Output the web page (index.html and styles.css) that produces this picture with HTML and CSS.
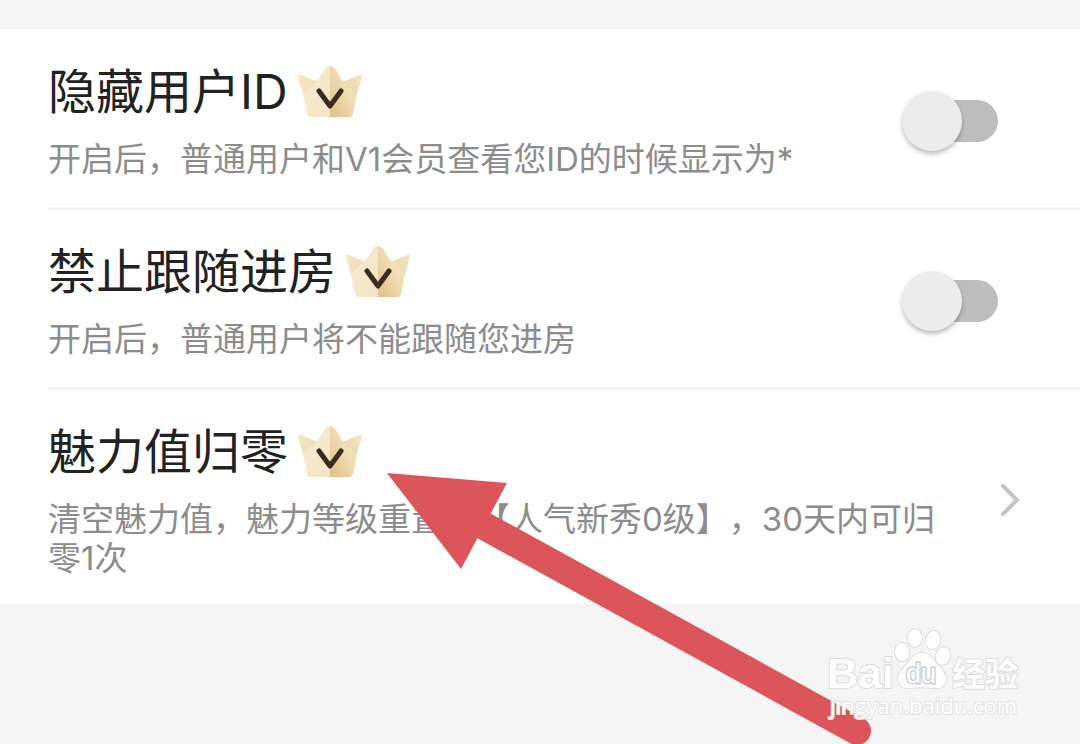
FILE: index.html
```
<!DOCTYPE html>
<html lang="zh-CN">
<head>
<meta charset="utf-8">
<meta name="viewport" content="width=device-width, initial-scale=1">
<title>隐私设置</title>
<link rel="stylesheet" href="styles.css">
</head>
<body>
<svg class="defs" aria-hidden="true">
  <defs>
    <linearGradient id="ear-left" x1="0" y1="0" x2="1" y2="1">
      <stop offset="0" stop-color="#f7e6c8"/>
      <stop offset="1" stop-color="#edd5a8"/>
    </linearGradient>
    <linearGradient id="ear-right" x1="1" y1="0" x2="0" y2="1">
      <stop offset="0" stop-color="#f5e6c6"/>
      <stop offset="1" stop-color="#e6cb98"/>
    </linearGradient>
    <linearGradient id="body-left" x1="0" y1="0" x2="1" y2="1">
      <stop offset="0" stop-color="#f8ecd5"/>
      <stop offset="1" stop-color="#f5e4c2"/>
    </linearGradient>
    <linearGradient id="body-right" x1="1" y1="0" x2="0" y2="1">
      <stop offset="0" stop-color="#f4e6c8"/>
      <stop offset="0.4" stop-color="#f1deb6"/>
      <stop offset="1" stop-color="#dfc08a"/>
    </linearGradient>
    <symbol id="crown" viewBox="0 0 68 54">
      <path fill="url(#ear-left)" d="M2 12Q2 9 5 10L24 18L14 45L9 36Z"/>
      <path fill="url(#ear-right)" d="M66 12Q66 9 63 10L44 18L54 45L59 36Z"/>
      <path fill="url(#body-left)" d="M34 1Q31 1 28 5Q24 14 16 21Q10 25 7 29L11 49Q12 52 15 52H34Z"/>
      <path fill="url(#body-right)" d="M34 1Q37 1 40 5Q44 14 52 21Q58 25 61 29L57 49Q56 52 53 52H34Z"/>
      <path fill="none" stroke="#3a2c20" stroke-width="5" stroke-linecap="round" stroke-linejoin="round" d="M23 26L34 41L45 26"/>
    </symbol>
  </defs>
</svg>
<main class="settings">
  <section class="row">
    <div class="info">
      <label class="title" for="hide-id">隐藏用户ID<svg class="crown" aria-hidden="true"><use href="#crown"/></svg></label>
      <p class="desc">开启后，普通用户和V1会员查看您ID的时候显示为*</p>
    </div>
    <input class="switch" id="hide-id" type="checkbox" role="switch">
  </section>
  <section class="row">
    <div class="info">
      <label class="title" for="no-follow">禁止跟随进房<svg class="crown" aria-hidden="true"><use href="#crown"/></svg></label>
      <p class="desc">开启后，普通用户将不能跟随您进房</p>
    </div>
    <input class="switch" id="no-follow" type="checkbox" role="switch">
  </section>
  <a class="row" href="#reset">
    <div class="info">
      <h2 class="title">魅力值归零<svg class="crown" aria-hidden="true"><use href="#crown"/></svg></h2>
      <p class="desc">清空魅力值，魅力等级重置为【人气新秀0级】，30天内可归零1次</p>
    </div>
    <svg class="chevron" viewBox="0 0 24 36" aria-hidden="true"><path d="M5 4L19 18L5 32"/></svg>
  </a>
</main>
<svg class="arrow" viewBox="0 0 488 276" aria-hidden="true">
  <path class="arrow-head" d="M0 2L120 12L74 98Z"/>
  <path class="arrow-shaft" d="M90 51L470 260"/>
</svg>
<svg class="watermark" viewBox="0 0 200 96" role="img" aria-label="Baidu经验 jingyan.baidu.com">
  <g class="mark">
    <text class="brand" x="0" y="61">Bai</text>
    <ellipse cx="75" cy="25" rx="7" ry="9" transform="rotate(-8 75 25)"/>
    <ellipse cx="88" cy="11" rx="7" ry="9"/>
    <ellipse cx="106" cy="13" rx="7" ry="9" transform="rotate(12 106 13)"/>
    <ellipse cx="116" cy="29" rx="7" ry="9" transform="rotate(20 116 29)"/>
    <path d="M95 26C86 26 83 34 79 38C75 43 70 47 71 53C72 60 77 62 83 61C91 60 99 60 107 61C113 62 118 60 119 53C120 47 115 43 111 38C107 34 104 26 95 26Z"/>
    <text class="du" x="79" y="56">du</text>
    <text class="cn" x="125" y="59">经验</text>
  </g>
  <text class="url" x="3" y="87">jingyan.baidu.com</text>
</svg>
</body>
</html>
```
FILE: styles.css
```
* {
  box-sizing: border-box;
}

body {
  margin: 0;
  padding-top: 30px;
  min-height: 100vh;
  position: relative;
  overflow: hidden;
  background: #f5f5f5;
  color: #222;
  font-family: Inter, "Noto Sans CJK SC", sans-serif;
  text-spacing-trim: space-all;
}

.defs {
  position: absolute;
  width: 0;
  height: 0;
}

.settings {
  background: #fff;
  padding-left: 48px;
}

.row {
  display: flex;
  align-items: center;
  justify-content: space-between;
  gap: 40px;
  padding: 32px 56px 28px 0;
  color: inherit;
  text-decoration: none;
}

.row + .row {
  border-top: 3px solid #f3f3f3;
}

.row:last-child {
  padding-right: 58px;
  padding-bottom: 26px;
}

.info {
  flex: 1;
}

.title {
  display: flex;
  align-items: center;
  gap: 8px;
  margin: 0 0 18px;
  font-size: 48px;
  font-weight: 400;
  line-height: 60px;
}

.crown {
  width: 68px;
  height: 54px;
}

.desc {
  margin: 0;
  color: #8c8c8c;
  font-size: 33px;
  line-height: 39px;
}

.switch {
  appearance: none;
  flex: none;
  display: flex;
  align-items: center;
  width: 88px;
  height: 42px;
  margin: 0 26px 0 0;
  border-radius: 21px;
  background: #bdbdbd;
}

.switch::before {
  content: "";
  flex: none;
  width: 60px;
  height: 60px;
  margin-left: -8px;
  border-radius: 50%;
  background: #ececec;
  box-shadow: 0 3px 4px rgba(0, 0, 0, 0.25);
}

.switch:checked::before {
  margin-left: 36px;
}

.chevron {
  flex: none;
  width: 24px;
  height: 36px;
  fill: none;
  stroke: #c4c4c4;
  stroke-width: 4;
  stroke-linecap: round;
}

.arrow {
  position: absolute;
  left: 387px;
  top: 471px;
  width: 488px;
  height: 276px;
}

.arrow-head {
  fill: #db555a;
}

.arrow-shaft {
  fill: none;
  stroke: #db555a;
  stroke-width: 28;
  stroke-linecap: round;
}

.watermark {
  position: absolute;
  left: 827px;
  top: 627px;
  width: 200px;
  height: 96px;
}

.mark {
  fill: #fff;
  stroke: #dcdcdc;
  stroke-width: 2;
  paint-order: stroke;
  font-weight: 700;
}

.brand {
  font-family: "Liberation Sans", sans-serif;
  font-size: 43px;
}

.du {
  font-family: "Liberation Sans", sans-serif;
  font-size: 27px;
  font-weight: 400;
  stroke: #cfcfcf;
  stroke-width: 3;
}

.cn {
  font-family: "Noto Sans CJK SC", sans-serif;
  font-size: 33px;
}

.url {
  fill: #fff;
  stroke: #e2e2e2;
  stroke-width: 2;
  paint-order: stroke;
  font-family: "Open Sans", sans-serif;
  font-size: 22px;
}
```
